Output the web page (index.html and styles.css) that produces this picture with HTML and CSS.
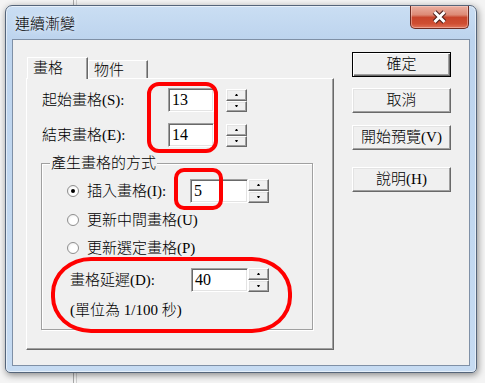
FILE: index.html
```html
<!DOCTYPE html>
<html lang="zh-Hant">
<head>
<meta charset="utf-8">
<title>連續漸變</title>
<link rel="stylesheet" href="styles.css">
</head>
<body>
<div class="win">
  <div class="titlebar">
    <span class="title">連續漸變</span>
    <div class="close">
      <svg width="17" height="14" viewBox="0 0 17 14">
        <path d="M3.5 2 L13.5 12 M13.5 2 L3.5 12" stroke="#4a1f1a" stroke-width="5" fill="none"/>
        <path d="M3.5 2 L13.5 12 M13.5 2 L3.5 12" stroke="#ffffff" stroke-width="3" fill="none"/>
      </svg>
    </div>
  </div>
  <div class="client">
    <div class="tabctl">
      <div class="tabs">
        <div class="tab sel">畫格</div>
        <div class="tab">物件</div>
      </div>
      <div class="panel">
        <div class="row">
          <span class="lbl w126">起始畫格(S):</span>
          <div class="edit e46">13</div>
          <div class="spin sep"><span class="up"></span><span class="dn"></span></div>
        </div>
        <div class="row r2">
          <span class="lbl w126">結束畫格(E):</span>
          <div class="edit e46">14</div>
          <div class="spin sep"><span class="up"></span><span class="dn"></span></div>
        </div>
        <fieldset class="group">
          <legend>產生畫格的方式</legend>
          <div class="row g1">
            <span class="radio on"></span>
            <span class="lbl w103">插入畫格(I):</span>
            <div class="edit e58">5</div>
            <div class="spin att"><span class="up"></span><span class="dn"></span></div>
          </div>
          <div class="row g2">
            <span class="radio"></span>
            <span class="lbl">更新中間畫格(U)</span>
          </div>
          <div class="row g3">
            <span class="radio"></span>
            <span class="lbl">更新選定畫格(P)</span>
          </div>
          <div class="row g4">
            <span class="lbl w121">畫格延遲(D):</span>
            <div class="edit e57">40</div>
            <div class="spin att"><span class="up"></span><span class="dn"></span></div>
          </div>
          <div class="note">(單位為 1/100 秒)</div>
        </fieldset>
      </div>
    </div>
    <div class="buttons">
      <div class="btn def">確定</div>
      <div class="btn b2">取消</div>
      <div class="btn b3">開始預覽(V)</div>
      <div class="btn b4">說明(H)</div>
    </div>
    <div class="mark m1"></div>
    <div class="mark m2"></div>
    <div class="mark m3"></div>
  </div>
</div>
</body>
</html>
```
FILE: styles.css
```css
html, body {
  margin: 0;
  padding: 0;
}
body {
  width: 485px;
  height: 383px;
  overflow: hidden;
  background:
    linear-gradient(90deg, transparent 73px, #a9a9a9 73px, #a9a9a9 74px, transparent 74px, transparent 76px, #cfcfcf 76px, #cfcfcf 77px, transparent 77px),
    #f4f4f4;
  font-family: "Liberation Serif", "Noto Sans CJK TC", serif;
  font-size: 15px;
  font-weight: 300;
  color: #000;
}
.win {
  box-sizing: border-box;
  margin: 5px 0 0 5px;
  width: 472px;
  height: 368px;
  border: 1px solid #55657a;
  border-radius: 7px 7px 5px 5px;
  padding: 0 6px 6px 6px;
  display: flex;
  flex-direction: column;
  background: linear-gradient(180deg, #cadef3 0px, #bdd4ee 33px, #c2d8f0 60%, #c6dbf2 100%);
  box-shadow: inset 0 0 0 1px rgba(255,255,255,0.55), 1px 2px 7px rgba(0,0,0,0.45);
}
.titlebar {
  height: 33px;
  flex: none;
  display: flex;
  justify-content: space-between;
  align-items: flex-start;
}
.title {
  margin: 7px 0 0 3px;
  font-family: "Noto Sans CJK TC", sans-serif;
  font-size: 15px;
  line-height: 20px;
  text-shadow: 0 0 6px rgba(255,255,255,0.9);
}
.close {
  box-sizing: border-box;
  width: 59px;
  height: 23px;
  margin-right: 1px;
  border: 1px solid #6d2b22;
  border-top: none;
  border-radius: 0 0 5px 5px;
  background: linear-gradient(180deg, #eab0a2 0%, #dd8a76 40%, #c8452c 52%, #cf4e32 80%, #e0745a 100%);
  box-shadow: inset 0 0 0 1px rgba(255,220,210,0.45);
  display: flex;
  align-items: center;
  justify-content: center;
}
.client {
  position: relative;
  box-sizing: border-box;
  height: 327px;
  flex: none;
  border: 1px solid #7f90a6;
  background: #f0f0f0;
  display: flex;
  align-items: flex-start;
  padding: 12px 0 0 13px;
}
.tabctl {
  margin-top: 5px;
  width: 308px;
}
.tabs {
  display: flex;
  align-items: flex-end;
  height: 21px;
  padding-left: 1px;
}
.tab {
  box-sizing: border-box;
  background: #f0f0f0;
  border-top: 1px solid #fff;
  border-left: 1px solid #fff;
  border-right: 1px solid #696969;
  box-shadow: inset -1px 0 0 #a0a0a0;
  line-height: 16px;
}
.tab.sel {
  position: relative;
  z-index: 1;
  width: 61px;
  height: 22px;
  margin-bottom: -1px;
  padding: 2px 0 0 5px;
}
.tab:not(.sel) {
  width: 60px;
  height: 18px;
  padding: 1px 0 0 5px;
}
.panel {
  box-sizing: border-box;
  width: 308px;
  height: 272px;
  border-top: 1px solid #fff;
  border-left: 1px solid #fff;
  border-right: 1px solid #696969;
  border-bottom: 1px solid #696969;
  box-shadow: inset -1px -1px 0 #a0a0a0;
  padding: 9px 0 0 15px;
}
.row {
  display: flex;
  align-items: center;
  height: 24px;
}
.lbl {
  line-height: 16px;
  white-space: nowrap;
}
.w126 { width: 126px; }
.w103 { width: 103px; }
.w121 { width: 121px; }
.r2 { margin-top: 11px; }
.edit {
  box-sizing: border-box;
  height: 24px;
  background: #fff;
  border: 1px solid;
  border-color: #a0a0a0 #fff #fff #a0a0a0;
  box-shadow: inset 1px 1px 0 #696969, inset -1px -1px 0 #e3e3e3;
  padding: 0 0 0 3px;
  font-size: 16px;
  line-height: 22px;
}
.e46 { width: 46px; }
.e58 { width: 58px; }
.e57 { width: 57px; }
.spin {
  display: flex;
  flex-direction: column;
  width: 21px;
}
.spin.sep {
  height: 23px;
  margin-left: 12px;
  align-self: flex-end;
}
.spin.att {
  height: 24px;
}
.spin span {
  flex: 1;
  box-sizing: border-box;
  background: #f0f0f0;
  border: 1px solid;
  border-color: #fff #696969 #696969 #fff;
  box-shadow: inset -1px -1px 0 #a0a0a0, inset 1px 1px 0 #e3e3e3;
  display: flex;
  align-items: center;
  justify-content: center;
}
.spin span::after {
  content: "";
  width: 1px;
  height: 0;
  border-left: 1px solid transparent;
  border-right: 1px solid transparent;
}
.spin .up::after { border-bottom: 2px solid #000; }
.spin .dn::after { border-top: 2px solid #000; }
.group {
  box-sizing: border-box;
  width: 272px;
  margin: 8px 0 0 -1px;
  padding: 0 0 11px 25px;
  border: 1px solid #a0a0a0;
  box-shadow: inset 1px 1px 0 #fff, 1px 1px 0 #fff;
  min-width: 0;
}
.group legend {
  margin-left: -17px;
  padding: 0 1px;
  line-height: 16px;
  background: #f0f0f0;
}
.g1 { margin-top: 8px; }
.g2 { margin-top: 5px; }
.g3 { margin-top: 4px; }
.g4 { margin-top: 8px; padding-left: 3px; }
.radio {
  box-sizing: border-box;
  width: 12px;
  height: 12px;
  margin-right: 8px;
  border-radius: 50%;
  border: 1px solid #8f8f8f;
  background: radial-gradient(circle at 60% 60%, #ffffff 40%, #e6e6e6 100%);
  display: flex;
  align-items: center;
  justify-content: center;
}
.radio.on::after {
  content: "";
  width: 4px;
  height: 4px;
  border-radius: 50%;
  background: #000;
}
.note {
  margin: 10px 0 0 3px;
  line-height: 16px;
}
.buttons {
  margin-left: 18px;
  display: flex;
  flex-direction: column;
}
.btn {
  box-sizing: border-box;
  width: 99px;
  height: 25px;
  border: 1px solid;
  border-color: #fff #696969 #696969 #fff;
  box-shadow: inset -1px -1px 0 #a0a0a0, inset 1px 1px 0 #e3e3e3;
  background: #f0f0f0;
  text-align: center;
  line-height: 22px;
}
.btn.def {
  border-color: #000;
  box-shadow: inset 1px 1px 0 #fff, inset -1px -1px 0 #696969, inset -2px -2px 0 #a0a0a0;
}
.b2 { margin-top: 11px; }
.b3 { margin-top: 12px; }
.b4 { margin-top: 17px; }
.mark {
  position: absolute;
  box-sizing: border-box;
  border: 4px solid #ff0000;
  pointer-events: none;
}
.m1 {
  left: 134px;
  top: 42px;
  width: 71px;
  height: 71px;
  border-radius: 12px;
}
.m2 {
  left: 161px;
  top: 128px;
  width: 49px;
  height: 42px;
  border-radius: 10px;
}
.m3 {
  left: 38px;
  top: 217px;
  width: 241px;
  height: 76px;
  border-radius: 40px / 36px;
}
```
